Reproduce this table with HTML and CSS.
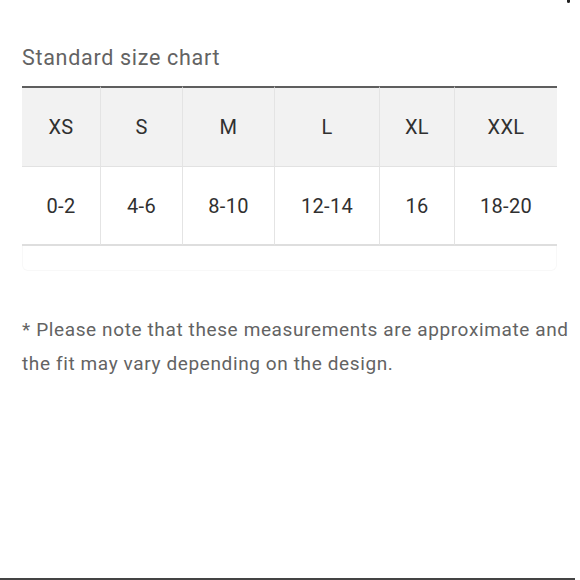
FILE: index.html
```html
<!DOCTYPE html>
<html>
<head>
<meta charset="utf-8">
<link rel="stylesheet" href="styles.css">
</head>
<body>
<div class="dot"></div>
<main class="page">
  <h2 class="title">Standard size chart</h2>
  <div class="scroller">
    <table class="chart">
      <colgroup>
        <col class="c1"><col class="c2"><col class="c3"><col class="c4"><col class="c5"><col class="c6">
      </colgroup>
      <thead>
        <tr><th>XS</th><th>S</th><th>M</th><th>L</th><th>XL</th><th>XXL</th></tr>
      </thead>
      <tbody>
        <tr><td>0-2</td><td>4-6</td><td>8-10</td><td>12-14</td><td>16</td><td>18-20</td></tr>
      </tbody>
    </table>
    <div class="scroll-foot"></div>
  </div>
  <p class="note">* Please note that these measurements are approximate and the fit may vary depending on the design.</p>
</main>
<div class="bottom-line"></div>
</body>
</html>
```
FILE: styles.css
```css
html, body {
  margin: 0;
  padding: 0;
  background: #fff;
}
body {
  width: 580px;
  height: 580px;
  position: relative;
  overflow: hidden;
  font-family: Roboto, "Liberation Sans", sans-serif;
}
.dot {
  position: absolute;
  top: 0;
  left: 567px;
  width: 3px;
  height: 3px;
  background: #222;
  border-radius: 0 0 2px 2px;
}
.page {
  padding: 45px 0 0 22px;
}
.title {
  margin: 0;
  font-size: 21.5px;
  line-height: 26px;
  letter-spacing: 0.7px;
  font-weight: 400;
  color: #636363;
}
.scroller {
  margin-top: 15px;
  width: 535px;
}
.chart {
  border-collapse: separate;
  border-spacing: 0;
  width: 535px;
  table-layout: fixed;
}
.c1 { width: 78px; }
.c2 { width: 82px; }
.c3 { width: 92px; }
.c4 { width: 105px; }
.c5 { width: 75px; }
.c6 { width: 103px; }
.chart th, .chart td {
  padding: 0;
  text-align: center;
  font-size: 20px;
  letter-spacing: 0.35px;
  font-weight: 400;
  color: #303030;
  border-left: 1px solid #e4e4e4;
}
.chart th:first-child, .chart td:first-child {
  border-left: none;
}
.chart th {
  height: 78px;
  background: #f2f2f2;
  border-top: 2px solid #5e5e5e;
  border-bottom: 1px solid #e2e2e2;
}
.chart td {
  height: 77px;
  background: #fff;
  border-bottom: 2px solid #dedede;
}
.scroll-foot {
  height: 24px;
  border-bottom: 1px solid #f8f8f8;
  border-left: 1px solid #f8f8f8;
  border-right: 1px solid #f8f8f8;
  border-radius: 0 0 6px 6px;
}
.note {
  margin: 42px 0 0;
  width: 552px;
  font-size: 19px;
  line-height: 34px;
  letter-spacing: 0.62px;
  color: #636363;
}
.bottom-line {
  position: absolute;
  left: 0;
  bottom: 0;
  width: 575px;
  height: 2px;
  background: #444;
}
```
